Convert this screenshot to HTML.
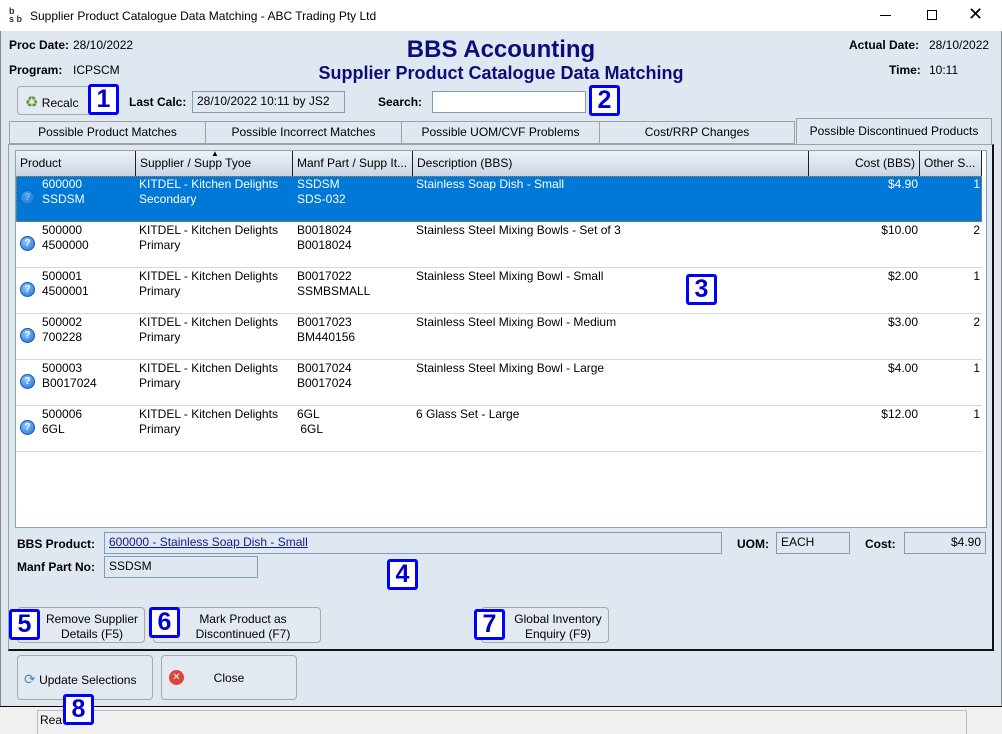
<!DOCTYPE html>
<html><head><meta charset="utf-8"><style>
*{box-sizing:border-box;margin:0;padding:0}
body{width:1002px;height:734px;overflow:hidden;position:relative;font-family:"Liberation Sans",Arial,sans-serif;font-size:12px;color:#000;background:#dfe7f1}
.a{position:absolute;white-space:nowrap}
.b{font-weight:bold}
.fld{position:absolute;border:1px solid #7f9db9;background:#dfe7f1;padding:2px 4px;height:22px}
.btn{position:absolute;border:1px solid #a9a9a9;border-radius:4px;background:#e3e9f1;text-align:center}
.co{position:absolute;width:31px;height:31px;border:3px solid #0000ff;background:#fff;border-radius:3px;color:#0000cc;font-weight:bold;font-size:25px;line-height:25px;text-align:center}
.tab{position:absolute;top:121px;height:23px;border:1px solid #a0a0a0;background:#dfe7f1;text-align:center;line-height:20px;font-size:12px}
.hd{position:absolute;top:151px;height:25px;line-height:25px;padding-left:4px;border-right:1px solid #222;background:linear-gradient(#eef2f8,#cbd5e3)}
.row{position:absolute;left:16px;width:966px;height:46px;border-bottom:1px solid #d8d8d8;background:#fff}
.row.sel{background:#0078d7;color:#fff;border:1px dotted #c08040}
.c{position:absolute;top:1px;line-height:15px}
.sel .c{top:0}
.q{position:absolute;left:4px;top:14px;width:15px;height:15px;border-radius:50%;background:radial-gradient(circle at 40% 35%,#8cc6ff,#1f6fd1);border:1px solid #1a56a8;color:#fff;font-size:10px;font-weight:bold;text-align:center;line-height:13px}
.sel .q{opacity:.5;left:3px;top:13px}
</style></head><body>
<div class="a" style="left:0;top:0;width:1002px;height:31px;background:#fff"></div>
<div class="a" style="left:9px;top:7px;font-size:9px;line-height:8px;font-weight:bold;color:#333">b<br>s b</div>
<div class="a" style="left:30px;top:9px;font-size:12px">Supplier Product Catalogue Data Matching - ABC Trading Pty Ltd</div>
<div class="a" style="left:880px;top:15px;width:11px;height:1px;background:#000"></div>
<div class="a" style="left:927px;top:10px;width:10px;height:10px;border:1px solid #000"></div>
<div class="a" style="left:968px;top:4px;font-size:18px">✕</div>
<div class="a" style="left:0;top:31px;width:1px;height:703px;background:#888"></div>
<div class="a" style="left:1001px;top:31px;width:1px;height:703px;background:#888"></div>

<div class="a b" style="left:9px;top:38px">Proc Date:</div><div class="a" style="left:73px;top:38px">28/10/2022</div>
<div class="a b" style="left:9px;top:63px">Program:</div><div class="a" style="left:73px;top:63px">ICPSCM</div>
<div class="a b" style="left:849px;top:38px">Actual Date:</div><div class="a" style="left:929px;top:38px">28/10/2022</div>
<div class="a b" style="left:889px;top:63px">Time:</div><div class="a" style="left:929px;top:63px">10:11</div>
<div class="a b" style="left:0;width:1002px;text-align:center;top:36px;font-size:24px;color:#0d0d7a">BBS Accounting</div>
<div class="a b" style="left:0;width:1002px;text-align:center;top:63px;font-size:18px;color:#0d0d7a">Supplier Product Catalogue Data Matching</div>

<div class="btn" style="left:17px;top:86px;width:80px;height:29px;text-align:left;padding:6px 0 0 7px;font-size:12px"><span style="color:#5a9a3a;font-size:15px">♻</span> Recalc</div>
<div class="co" style="left:88px;top:84px">1</div>
<div class="a b" style="left:129px;top:95px">Last Calc:</div>
<div class="fld" style="left:192px;top:91px;width:153px">28/10/2022 10:11 by JS2</div>
<div class="a b" style="left:378px;top:95px">Search:</div>
<div class="fld" style="left:432px;top:91px;width:154px;background:#fff"></div>
<div class="co" style="left:589px;top:85px">2</div>

<div class="tab" style="left:9px;width:197px">Possible Product Matches</div>
<div class="tab" style="left:205px;width:197px">Possible Incorrect Matches</div>
<div class="tab" style="left:401px;width:199px">Possible UOM/CVF Problems</div>
<div class="tab" style="left:599px;width:196px">Cost/RRP Changes</div>
<div class="tab" style="left:796px;top:118px;width:196px;height:27px;border-bottom:none;line-height:24px">Possible Discontinued Products</div>
<div class="a" style="left:8px;top:144px;width:986px;height:507px;border:1px solid #a0a0a0;border-right:2px solid #111;border-bottom:2px solid #111"></div>

<div class="a" style="left:15px;top:150px;width:972px;height:378px;background:#fff;border:1px solid #8aa0b8"></div>
<div class="hd" style="left:16px;width:120px">Product</div>
<div class="hd" style="left:136px;width:157px">Supplier / Supp Tyoe</div>
<div class="a" style="left:211px;top:149px;font-size:8px">▲</div>
<div class="hd" style="left:293px;width:120px">Manf Part / Supp It...</div>
<div class="hd" style="left:413px;width:396px">Description (BBS)</div>
<div class="hd" style="left:809px;width:111px;text-align:right;padding-right:4px">Cost (BBS)</div>
<div class="hd" style="left:920px;width:62px">Other S...</div>

<div class="row sel" style="top:176px"><div class="q">?</div><div class="c" style="left:25px">600000<br>SSDSM</div><div class="c" style="left:122px">KITDEL - Kitchen Delights<br>Secondary</div><div class="c" style="left:280px">SSDSM<br>SDS-032</div><div class="c" style="left:399px">Stainless Soap Dish - Small</div><div class="c" style="right:63px">$4.90</div><div class="c" style="right:1px">1</div></div>
<div class="row" style="top:222px"><div class="q">?</div><div class="c" style="left:26px">500000<br>4500000</div><div class="c" style="left:123px">KITDEL - Kitchen Delights<br>Primary</div><div class="c" style="left:281px">B0018024<br>B0018024</div><div class="c" style="left:400px">Stainless Steel Mixing Bowls - Set of 3</div><div class="c" style="right:64px">$10.00</div><div class="c" style="right:2px">2</div></div>
<div class="row" style="top:268px"><div class="q">?</div><div class="c" style="left:26px">500001<br>4500001</div><div class="c" style="left:123px">KITDEL - Kitchen Delights<br>Primary</div><div class="c" style="left:281px">B0017022<br>SSMBSMALL</div><div class="c" style="left:400px">Stainless Steel Mixing Bowl - Small</div><div class="c" style="right:64px">$2.00</div><div class="c" style="right:2px">1</div></div>
<div class="row" style="top:314px"><div class="q">?</div><div class="c" style="left:26px">500002<br>700228</div><div class="c" style="left:123px">KITDEL - Kitchen Delights<br>Primary</div><div class="c" style="left:281px">B0017023<br>BM440156</div><div class="c" style="left:400px">Stainless Steel Mixing Bowl - Medium</div><div class="c" style="right:64px">$3.00</div><div class="c" style="right:2px">2</div></div>
<div class="row" style="top:360px"><div class="q">?</div><div class="c" style="left:26px">500003<br>B0017024</div><div class="c" style="left:123px">KITDEL - Kitchen Delights<br>Primary</div><div class="c" style="left:281px">B0017024<br>B0017024</div><div class="c" style="left:400px">Stainless Steel Mixing Bowl - Large</div><div class="c" style="right:64px">$4.00</div><div class="c" style="right:2px">1</div></div>
<div class="row" style="top:406px"><div class="q">?</div><div class="c" style="left:26px">500006<br>6GL</div><div class="c" style="left:123px">KITDEL - Kitchen Delights<br>Primary</div><div class="c" style="left:281px">6GL<br>&nbsp;6GL</div><div class="c" style="left:400px">6 Glass Set - Large</div><div class="c" style="right:64px">$12.00</div><div class="c" style="right:2px">1</div></div>
<div class="co" style="left:686px;top:274px">3</div>

<div class="a b" style="left:17px;top:537px">BBS Product:</div>
<div class="fld" style="left:104px;top:532px;width:618px;color:#1a1a8c;text-decoration:underline">600000 - Stainless Soap Dish - Small</div>
<div class="a b" style="left:737px;top:537px">UOM:</div>
<div class="fld" style="left:776px;top:532px;width:74px">EACH</div>
<div class="a b" style="left:865px;top:537px">Cost:</div>
<div class="fld" style="left:904px;top:532px;width:82px;text-align:right">$4.90</div>
<div class="a b" style="left:17px;top:560px">Manf Part No:</div>
<div class="fld" style="left:104px;top:556px;width:154px">SSDSM</div>
<div class="co" style="left:387px;top:559px">4</div>

<div class="btn" style="left:17px;top:607px;width:128px;height:36px;padding-top:4px;padding-left:22px;line-height:15px">Remove Supplier<br>Details (F5)</div>
<div class="co" style="left:9px;top:609px">5</div>
<div class="btn" style="left:153px;top:607px;width:168px;height:36px;padding-top:4px;padding-left:12px;line-height:15px">Mark Product as<br>Discontinued (F7)</div>
<div class="co" style="left:149px;top:607px">6</div>
<div class="btn" style="left:481px;top:607px;width:128px;height:36px;padding-top:4px;padding-left:26px;line-height:15px">Global Inventory<br>Enquiry (F9)</div>
<div class="co" style="left:474px;top:609px">7</div>

<div class="btn" style="left:17px;top:655px;width:136px;height:45px;padding-top:15px;padding-left:6px;text-align:left"><span style="color:#4a8ac8;font-size:14px">⟳</span> Update Selections</div>
<div class="btn" style="left:161px;top:655px;width:136px;height:45px;padding-top:15px"><span class="a" style="left:7px;top:14px;width:15px;height:15px;border-radius:50%;background:#e0433a;color:#fff;font-size:10px;line-height:15px;text-align:center">✕</span>Close</div>

<div class="a" style="left:0;top:706px;width:1002px;height:28px;background:#f0f0f0;border-top:1px solid #000"></div>
<div class="a" style="left:37px;top:710px;width:930px;height:24px;border:1px solid #bbb;border-bottom:none;padding:2px 0 0 2px">Rea</div>
<div class="co" style="left:63px;top:694px">8</div>
</body></html>
